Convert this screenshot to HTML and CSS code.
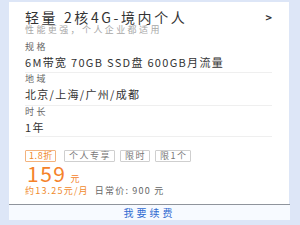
FILE: index.html
```html
<!DOCTYPE html>
<html>
<head>
<meta charset="utf-8">
<link rel="stylesheet" href="styles.css">
</head>
<body>
<div class="card">
  <div class="body">
    <div class="title-row">
      <div class="title">轻量 2核4G-境内个人</div>
      <div class="arrow">&gt;</div>
    </div>
    <div class="subtitle">性能更强，个人企业都适用</div>
    <div class="label first">规格</div>
    <div class="value sep">6M带宽 70GB SSD盘 600GB月流量</div>
    <div class="label">地域</div>
    <div class="value sep sep-b">北京/上海/广州/成都</div>
    <div class="label">时长</div>
    <div class="value sep sep-c">1年</div>
    <div class="tags">
      <span class="tag tag-hot">1.8折</span>
      <span class="tag">个人专享</span>
      <span class="tag">限时</span>
      <span class="tag">限1个</span>
    </div>
    <div class="price"><span class="num">159</span><span class="unit">元</span></div>
    <div class="meta"><span class="monthly">约13.25元/月</span><span class="regular">日常价: 900 元</span></div>
  </div>
  <div class="footer">我要续费</div>
</div>
</body>
</html>
```

FILE: styles.css
```css
html, body {
  margin: 0;
  padding: 0;
}
body {
  width: 300px;
  height: 225px;
  background: #dde6f7;
  font-family: "Noto Sans CJK SC", "Noto Sans", sans-serif;
  overflow: hidden;
}
.card {
  margin: 2px 11px 0 9px;
  background: #ffffff;
}
.body {
  padding: 7px 17px 7px 16px;
}
.title-row {
  display: flex;
  justify-content: space-between;
  align-items: center;
  height: 14px;
  margin-top: 1px;
}
.title {
  font-size: 14px;
  line-height: 14px;
  letter-spacing: 2.6px;
  color: #333;
}
.arrow {
  font-size: 11px;
  font-weight: bold;
  line-height: 14px;
  color: #333;
}
.subtitle {
  margin-top: 1px;
  font-size: 9px;
  line-height: 10px;
  letter-spacing: 2.4px;
  color: #a8a8a8;
}
.label {
  font-size: 9px;
  line-height: 12px;
  letter-spacing: 2.4px;
  color: #666;
}
.label.first {
  margin-top: 6px;
}
.value {
  font-size: 11px;
  line-height: 14px;
  letter-spacing: 1.3px;
  color: #333;
  margin-top: 2px;
}
.sep {
  padding-bottom: 3px;
  border-bottom: 1px solid #efefef;
}
.sep-b {
  padding-bottom: 4px;
}
.sep-c {
  padding-bottom: 2px;
}
.tags {
  display: flex;
  gap: 5px;
  margin-top: 13px;
}
.tag {
  font-size: 9px;
  line-height: 10px;
  letter-spacing: 1.5px;
  padding: 0 3px 0 4px;
  border: 1px solid #cfcfcf;
  border-radius: 1px;
  color: #777;
}
.tag-hot {
  border-color: #f3b37e;
  color: #f08a2c;
  padding: 0 2px 0 3px;
  letter-spacing: 0.6px;
  margin-right: 3px;
}
.price {
  margin-top: 1px;
  height: 20px;
  display: flex;
  align-items: baseline;
  color: #f5822a;
}
.num {
  font-size: 21px;
  line-height: 20px;
  letter-spacing: 1.5px;
  padding-left: 2px;
}
.unit {
  font-size: 9px;
  margin-left: 4px;
}
.meta {
  margin-top: 2px;
  font-size: 9px;
  line-height: 12px;
  letter-spacing: 1.2px;
  display: flex;
  gap: 6px;
}
.monthly {
  color: #f08a2c;
}
.regular {
  color: #666;
}
.footer {
  border-top: 1px solid #8f949c;
  margin-right: -1px;
  height: 15px;
  line-height: 15px;
  background: #f7faff;
  text-align: center;
  font-size: 10px;
  letter-spacing: 3px;
  color: #2f6bd1;
}
```
